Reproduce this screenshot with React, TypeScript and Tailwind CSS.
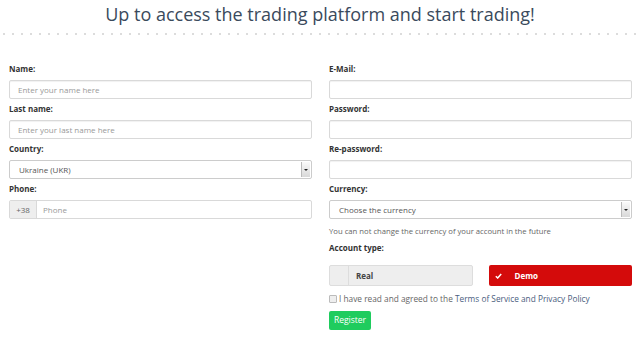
import { ReactNode } from "react";

function Label({ children }: { children: ReactNode }) {
  return <div className="text-[8px] font-bold leading-[12px] text-[#333] mb-[5px]">{children}</div>;
}

function Field({ placeholder }: { placeholder?: string }) {
  return (
    <div className="h-[19px] mb-[4px] border border-[#d9d9d9] rounded-[2px] shadow-[inset_0_1px_1px_rgba(0,0,0,0.06)] px-[8px] flex items-center text-[8px] text-[#999]">
      {placeholder}
    </div>
  );
}

function Select({ value }: { value: string }) {
  return (
    <div className="h-[19px] mb-[4px] border border-[#ccc] rounded-[2px] flex items-stretch text-[8px] text-[#555]">
      <div className="flex-1 flex items-center pl-[9px]">{value}</div>
      <div className="w-[9px] m-[1px] border-l border-[#bbb] bg-gradient-to-b from-[#fafafa] to-[#d8d8d8] flex items-center justify-center">
        <div className="w-0 h-0 border-l-[2px] border-r-[2px] border-t-[2px] border-l-transparent border-r-transparent border-t-[#222]" />
      </div>
    </div>
  );
}

export default function App() {
  const dots = Array.from({ length: 71 });
  return (
    <div className="w-[640px] h-[339px] bg-white overflow-hidden font-['Open_Sans',sans-serif]">
      <h1 className="text-center text-[18px] leading-[28px] text-[#3a4a5c]">
        Up to access the trading platform and start trading!
      </h1>

      {/* dotted divider */}
      <div className="flex justify-between px-[3px] mt-[5px] h-[2px]">
        {dots.map((_, i) => (
          <span key={i} className="w-[2px] h-[2px] rounded-full bg-[#d0d0d0]" />
        ))}
      </div>

      <div className="grid grid-cols-2 gap-x-[17px] pl-[9px] pr-[8px] pt-[28px]">
        <div>
          <Label>Name:</Label>
          <Field placeholder="Enter your name here" />
          <Label>Last name:</Label>
          <Field placeholder="Enter your last name here" />
          <Label>Country:</Label>
          <Select value="Ukraine (UKR)" />
          <Label>Phone:</Label>
          <div className="h-[19px] border border-[#d9d9d9] rounded-[2px] flex text-[8px]">
            <div className="w-[27px] bg-[#eee] border-r border-[#d9d9d9] flex items-center justify-center text-[#666]">+38</div>
            <div className="flex-1 flex items-center pl-[6px] text-[#999]">Phone</div>
          </div>
        </div>

        <div>
          <Label>E-Mail:</Label>
          <Field />
          <Label>Password:</Label>
          <Field />
          <Label>Re-password:</Label>
          <Field />
          <Label>Currency:</Label>
          <Select value="Choose the currency" />
          <div className="text-[7.7px] leading-[12px] text-[#666] mt-[6px]">
            You can not change the currency of your account in the future
          </div>
          <div className="mt-[5px]">
            <Label>Account type:</Label>
          </div>

          <div className="grid grid-cols-2 gap-x-[16px] mt-[11px]">
            <div className="h-[21px] flex bg-[#eee] border border-[#ddd] rounded-[2px] text-[8px] font-bold text-[#444]">
              <div className="w-[19px] border-r border-[#ddd]" />
              <div className="flex items-center pl-[7px]">Real</div>
            </div>
            <div className="h-[21px] flex bg-[#d40b0b] rounded-[2px] text-[8px] font-bold text-white">
              <div className="w-[19px] flex items-center justify-center">
                <svg width="7" height="6" viewBox="0 0 7 6">
                  <path d="M0.8 3.2 L2.7 5 L6.2 1" fill="none" stroke="#fff" strokeWidth="1.5" />
                </svg>
              </div>
              <div className="flex items-center pl-[7px]">Demo</div>
            </div>
          </div>

          <div className="flex items-center mt-[7px] h-[12px] text-[8.3px] text-[#666]">
            <span className="w-[8px] h-[8px] border border-[#bbb] bg-[#eee] rounded-[1px] mr-[2px]" />
            <span>
              I have read and agreed to the <span className="text-[#4a5d7e]">Terms of Service and Privacy Policy</span>
            </span>
          </div>

          <button className="mt-[6px] h-[19px] w-[42px] bg-[#1fcc5e] rounded-[2px] text-white text-[8.5px] flex items-center justify-center">
            Register
          </button>
        </div>
      </div>
    </div>
  );
}
